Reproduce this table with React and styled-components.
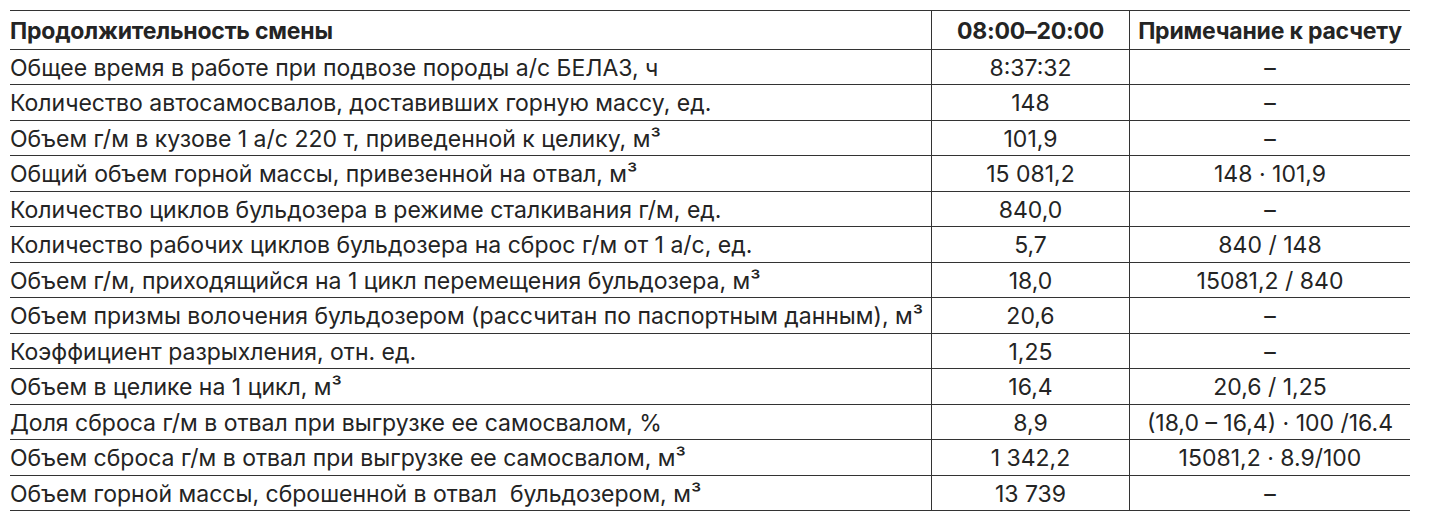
import React from 'react';
import styled, { createGlobalStyle } from 'styled-components';

const rows = [
  ['Общее время в работе при подвозе породы а/с БЕЛАЗ, ч', '8:37:32', '–'],
  ['Количество автосамосвалов, доставивших горную массу, ед.', '148', '–'],
  ['Объем г/м в кузове 1 а/с 220 т, приведенной к целику, м³', '101,9', '–'],
  ['Общий объем горной массы, привезенной на отвал, м³', '15 081,2', '148 · 101,9'],
  ['Количество циклов бульдозера в режиме сталкивания г/м, ед.', '840,0', '–'],
  ['Количество рабочих циклов бульдозера на сброс г/м от 1 а/с, ед.', '5,7', '840 / 148'],
  ['Объем г/м, приходящийся на 1 цикл перемещения бульдозера, м³', '18,0', '15081,2 / 840'],
  ['Объем призмы волочения бульдозером (рассчитан по паспортным данным), м³', '20,6', '–'],
  ['Коэффициент разрыхления, отн. ед.', '1,25', '–'],
  ['Объем в целике на 1 цикл, м³', '16,4', '20,6 / 1,25'],
  ['Доля сброса г/м в отвал при выгрузке ее самосвалом, %', '8,9', '(18,0 – 16,4) · 100 /16.4'],
  ['Объем сброса г/м в отвал при выгрузке ее самосвалом, м³', '1 342,2', '15081,2 · 8.9/100'],
  ['Объем горной массы, сброшенной в отвал  бульдозером, м³', '13 739', '–'],
];

const GlobalStyle = createGlobalStyle`
  body {
    margin: 0;
    background: #fff;
    font-family: Inter, 'Open Sans', 'Liberation Sans', sans-serif;
    color: #242424;
  }
`;

const Page = styled.div`
  padding: 10px 31px 0 10px;
`;

const Table = styled.div`
  display: grid;
  grid-template-columns: 921px 198px 281px;
  border-top: 1.5px solid #333;
`;

const Cell = styled.div`
  height: ${p => (p.$head ? '38.5px' : '35.5px')};
  box-sizing: border-box;
  display: flex;
  align-items: center;
  justify-content: ${p => (p.$center ? 'center' : 'flex-start')};
  padding-top: 2px;
  border-bottom: 1.5px solid #333;
  border-left: ${p => (p.$divider ? '1.5px solid #333' : 'none')};
  font-size: 23px;
  font-weight: ${p => (p.$head ? 700 : 400)};
  letter-spacing: ${p => (p.$head ? '-0.2px' : '0')};
  white-space: pre;
`;

export default function App() {
  return (
    <Page>
      <GlobalStyle />
      <Table>
        <Cell $head>Продолжительность смены</Cell>
        <Cell $head $center $divider>08:00–20:00</Cell>
        <Cell $head $center $divider>Примечание к расчету</Cell>
        {rows.map(row => (
          <React.Fragment key={row[0]}>
            <Cell>{row[0]}</Cell>
            <Cell $center $divider>{row[1]}</Cell>
            <Cell $center $divider>{row[2]}</Cell>
          </React.Fragment>
        ))}
      </Table>
    </Page>
  );
}
